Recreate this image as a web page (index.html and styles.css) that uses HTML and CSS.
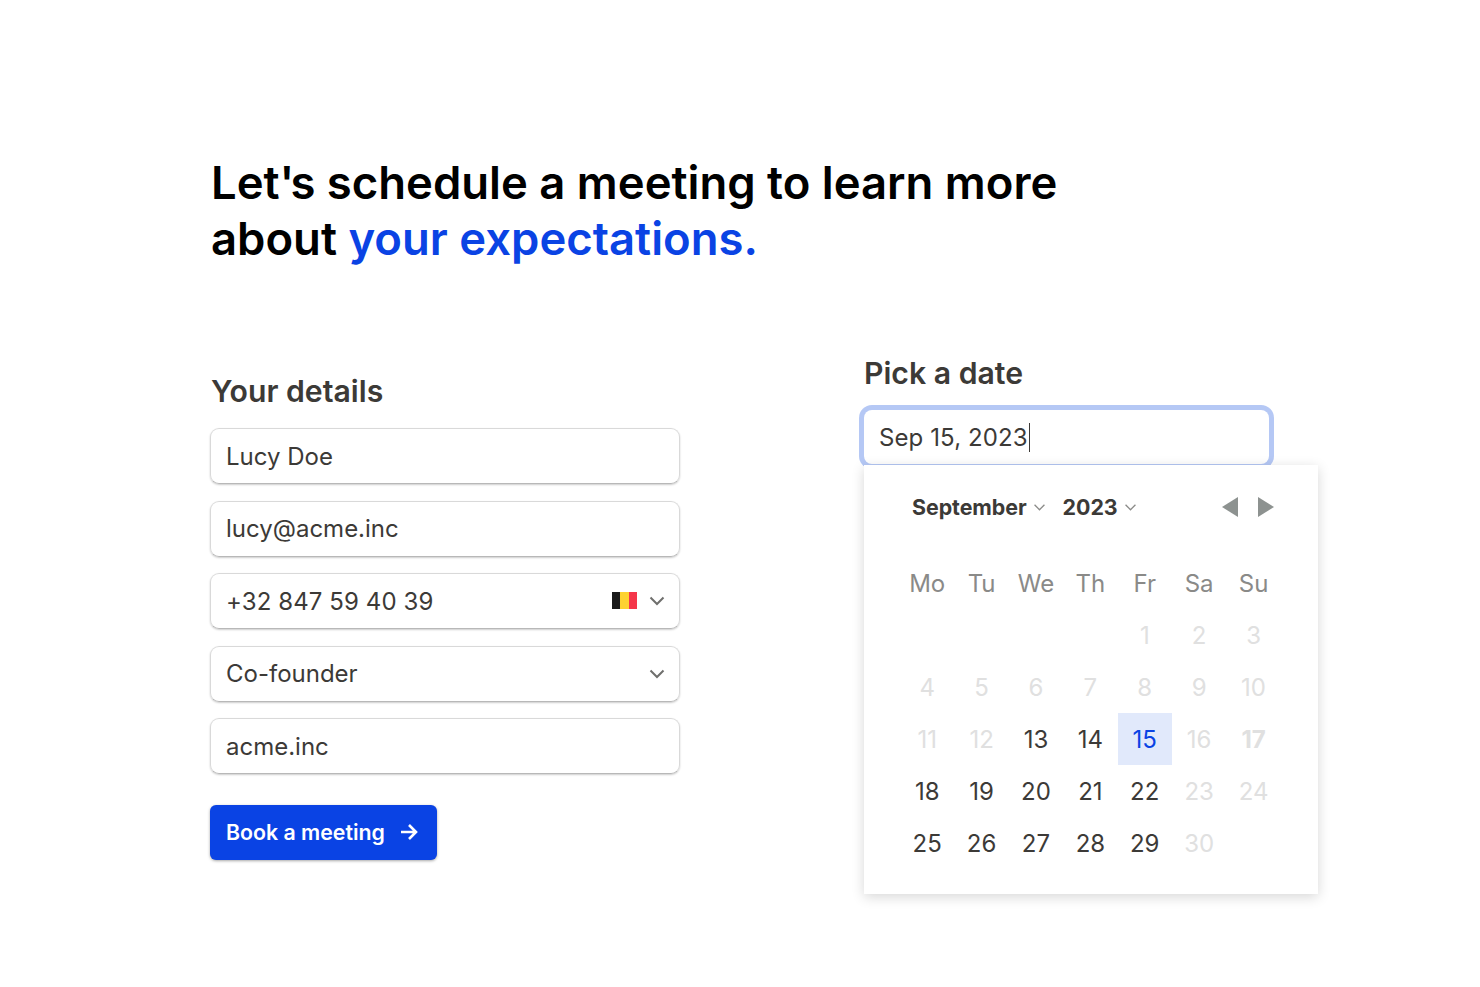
FILE: index.html
```html
<!DOCTYPE html>
<html lang="en">
  <head>
    <meta charset="UTF-8" />
    <meta name="viewport" content="width=device-width, initial-scale=1.0" />
    <title>Book a meeting</title>
    <link rel="stylesheet" href="styles.css">
  </head>
  <body>
    <div class="page">
      <h1>Let<span class="apostrophe">'</span>s schedule a meeting to learn more<br />about <span class="accent">your expectations.</span></h1>
      <div class="columns">
        <form class="details">
          <h2>Your details</h2>
          <div class="field">Lucy Doe</div>
          <div class="field">lucy@acme.inc</div>
          <div class="field">
            <span class="phone">+32 847 59 40 39</span>
            <span class="flag"><i class="black"></i><i class="yellow"></i><i class="red"></i></span>
            <svg class="chevron" viewBox="0 0 16 10"><path d="M1.5 1.5 8 8l6.500-6.500" /></svg>
          </div>
          <div class="field">
            <span class="grow">Co-founder</span>
            <svg class="chevron" viewBox="0 0 16 10"><path d="M1.5 1.5 8 8l6.500-6.500" /></svg>
          </div>
          <div class="field">acme.inc</div>
          <button type="button" class="book-button">
            Book a meeting
            <svg class="arrow" viewBox="0 0 18 18"><path d="M1 9h15M9 2l7 7-7 7" /></svg>
          </button>
        </form>
        <div class="picker">
          <h2>Pick a date</h2>
          <div class="date-input">Sep 15, 2023<span class="caret"></span></div>
          <div class="calendar">
            <div class="cal-header">
              <span class="cal-select">September</span>
              <svg class="mini-chevron" viewBox="0 0 10 6"><path d="M.5.5 5 5 9.500.5" /></svg>
              <span class="cal-select year">2023</span>
              <svg class="mini-chevron" viewBox="0 0 10 6"><path d="M.5.5 5 5 9.500.5" /></svg>
              <span class="cal-nav">
                <svg viewBox="0 0 16 20"><polygon points="16,0 16,20 0,10" /></svg>
                <svg viewBox="0 0 16 20"><polygon points="0,0 0,20 16,10" /></svg>
              </span>
            </div>
            <div class="cal-grid">
              <span class="weekday">Mo</span><span class="weekday">Tu</span><span class="weekday">We</span><span class="weekday">Th</span><span class="weekday">Fr</span><span class="weekday">Sa</span><span class="weekday">Su</span>
              <span></span><span></span><span></span><span></span><span class="off">1</span><span class="off">2</span><span class="off">3</span>
              <span class="off">4</span><span class="off">5</span><span class="off">6</span><span class="off">7</span><span class="off">8</span><span class="off">9</span><span class="off">10</span>
              <span class="off">11</span><span class="off">12</span><span>13</span><span>14</span><span class="selected">15</span><span class="off">16</span><span class="off today">17</span>
              <span>18</span><span>19</span><span>20</span><span>21</span><span>22</span><span class="off">23</span><span class="off">24</span>
              <span>25</span><span>26</span><span>27</span><span>28</span><span>29</span><span class="off">30</span><span></span>
            </div>
          </div>
        </div>
      </div>
    </div>
  </body>
</html>
```

FILE: styles.css
```css
body {
  margin: 0;
  background-color: #fff;
  font-family: Inter, "Liberation Sans", sans-serif;
  color: #3c3a37;
}
.page {
  padding: 155px 0 93px 210px;
}
h1 {
  margin: 0 0 0 1px;
  font-size: 45.45px;
  line-height: 56px;
  font-weight: 600;
  color: #000;
}
.apostrophe {
  letter-spacing: -4px;
}
.accent {
  color: #0a43e4;
}
h2 {
  margin: 0;
  font-size: 30.2px;
  line-height: 36px;
  font-weight: 600;
  color: #3c3a37;
}
.columns {
  display: flex;
  align-items: flex-start;
  margin-top: 88px;
}
.details {
  width: 470px;
  margin-top: 18px;
  display: flex;
  flex-direction: column;
  gap: 16.5px;
}
.details h2 {
  margin: 0 0 2.5px 1px;
}
.field {
  box-sizing: border-box;
  height: 56px;
  padding: 0 14px 0 15px;
  display: flex;
  align-items: center;
  font-size: 24px;
  letter-spacing: 0;
  border: 1px solid #d9d9d9;
  border-bottom-color: #b8b8b8;
  border-radius: 9px;
  box-shadow: 0 1px 2px rgba(0, 0, 0, 0.2);
}
.phone {
  flex: 1;
  letter-spacing: 0.1px;
}
.grow {
  flex: 1;
}
.flag {
  display: flex;
  width: 25px;
  height: 17px;
  margin: -1px 12px 0 0;
}
.flag i {
  flex: 1;
}
.black {
  background: #1a1a1a;
}
.yellow {
  background: #fdd231;
}
.red {
  background: #f5364a;
}
.chevron {
  width: 16px;
  height: 10px;
  fill: none;
  stroke: #6f6f6d;
  stroke-width: 2;
}
.book-button {
  align-self: flex-start;
  margin-top: 14.5px;
  width: 227px;
  height: 55px;
  padding: 0 0 1px 16px;
  display: flex;
  align-items: center;
  gap: 15px;
  font-family: inherit;
  font-size: 21.3px;
  font-weight: 600;
  color: #fff;
  background-color: #0a43e4;
  border: none;
  border-radius: 6px;
  box-shadow: 0 1px 3px rgba(0, 0, 0, 0.35);
}
.arrow {
  width: 18px;
  height: 18px;
  fill: none;
  stroke: #fff;
  stroke-width: 2.6;
}
.picker {
  width: 454px;
  margin-left: 184px;
}
.picker h2 {
  margin-bottom: 19px;
}
.date-input {
  box-sizing: border-box;
  width: 405px;
  height: 54px;
  padding-left: 15px;
  display: flex;
  align-items: center;
  font-size: 24px;
  letter-spacing: 0.1px;
  background: #fff;
  border-radius: 8px;
  box-shadow: 0 0 0 5px #b5c8f5;
}
.caret {
  width: 1.5px;
  height: 29px;
  margin-left: 1px;
  background: #3c3a37;
}
.calendar {
  position: relative;
  box-sizing: border-box;
  height: 429px;
  margin-top: 1px;
  padding: 0 37px 0 36px;
  background: #fff;
  box-shadow: 0 3px 12px rgba(0, 0, 0, 0.16);
}
.cal-header {
  height: 92px;
  padding: 0 7px 8px 12px;
  box-sizing: border-box;
  display: flex;
  align-items: center;
  font-size: 21.4px;
  font-weight: 700;
}
.cal-select {
  letter-spacing: -0.05px;
}
.cal-select.year {
  margin-left: 18px;
}
.mini-chevron {
  width: 11px;
  height: 7px;
  margin-left: 7px;
  fill: none;
  stroke: #8b8b89;
  stroke-width: 1.2;
}
.cal-nav {
  margin-left: auto;
  display: flex;
  gap: 20px;
}
.cal-nav svg {
  width: 16px;
  height: 20px;
  fill: #8d9290;
}
.cal-grid {
  display: grid;
  grid-template-columns: repeat(7, 54.4px);
  grid-auto-rows: 52px;
  font-size: 24px;
}
.cal-grid span {
  display: flex;
  align-items: center;
  justify-content: center;
}
.cal-grid .weekday {
  color: #8a8a88;
}
.cal-grid .off {
  color: #e0e0e0;
}
.cal-grid .today {
  font-weight: 700;
}
.cal-grid .selected {
  color: #0a43e4;
  background: #e1e9fb;
}
```
